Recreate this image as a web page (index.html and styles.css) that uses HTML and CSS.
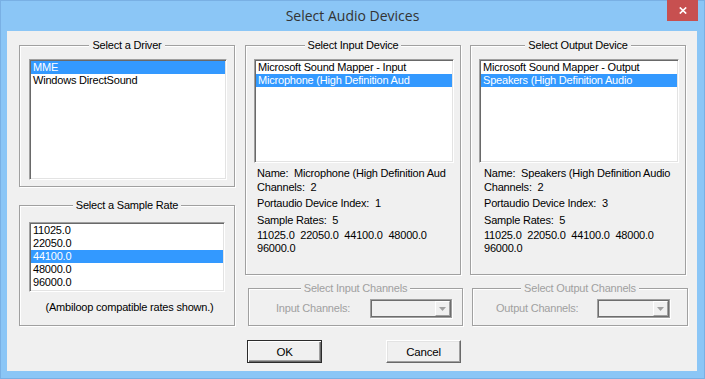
FILE: index.html
```html
<!DOCTYPE html>
<html>
<head>
<meta charset="utf-8">
<title>Select Audio Devices</title>
<link rel="stylesheet" href="styles.css">
</head>
<body>
<div class="window">
  <div class="titlebar">
    <div class="title">Select Audio Devices</div>
    <div class="close">
      <svg width="8" height="7" viewBox="0 0 8 7"><path d="M0.8 0.5 L7.2 6.5 M7.2 0.5 L0.8 6.5" stroke="#fff" stroke-width="1.7"/></svg>
    </div>
  </div>
  <div class="client">
    <div class="columns">
      <div class="col">
        <div class="group g-driver">
          <div class="gtitle">Select a Driver</div>
          <div class="listbox lb-driver">
            <div class="item sel">MME</div>
            <div class="item">Windows DirectSound</div>
          </div>
        </div>
        <div class="group g-rate">
          <div class="gtitle">Select a Sample Rate</div>
          <div class="listbox lb-rate">
            <div class="item">11025.0</div>
            <div class="item">22050.0</div>
            <div class="item sel">44100.0</div>
            <div class="item">48000.0</div>
            <div class="item">96000.0</div>
          </div>
          <div class="note">(Ambiloop compatible rates shown.)</div>
        </div>
      </div>
      <div class="col col-mid">
        <div class="group g-device">
          <div class="gtitle">Select Input Device</div>
          <div class="listbox lb-device">
            <div class="item">Microsoft Sound Mapper - Input</div>
            <div class="item sel">Microphone (High Definition Aud</div>
          </div>
          <div class="info info-in">
            <div class="i-name">Name:  Microphone (High Definition Aud</div>
            <div class="i-ch">Channels:  2</div>
            <div class="i-pa">Portaudio Device Index:  1</div>
            <div class="i-sr">Sample Rates:  5</div>
            <div class="i-rates">11025.0  22050.0  44100.0  48000.0<br>96000.0</div>
          </div>
        </div>
        <div class="group g-chan g-chan-in">
          <div class="gtitle disabled">Select Input Channels</div>
          <div class="chanrow">
            <span class="chanlabel chanlabel-in">Input Channels:</span>
            <div class="combo combo-in">
              <div class="dd"><svg width="7" height="4" viewBox="0 0 7 4"><path d="M0 0 H7 L3.5 4 Z" fill="#a0a0a0"/></svg></div>
            </div>
          </div>
        </div>
      </div>
      <div class="col col-right">
        <div class="group g-device">
          <div class="gtitle">Select Output Device</div>
          <div class="listbox lb-device">
            <div class="item">Microsoft Sound Mapper - Output</div>
            <div class="item sel">Speakers (High Definition Audio</div>
          </div>
          <div class="info info-out">
            <div class="i-name">Name:  Speakers (High Definition Audio</div>
            <div class="i-ch">Channels:  2</div>
            <div class="i-pa">Portaudio Device Index:  3</div>
            <div class="i-sr">Sample Rates:  5</div>
            <div class="i-rates">11025.0  22050.0  44100.0  48000.0<br>96000.0</div>
          </div>
        </div>
        <div class="group g-chan g-chan-out">
          <div class="gtitle disabled">Select Output Channels</div>
          <div class="chanrow">
            <span class="chanlabel chanlabel-out">Output Channels:</span>
            <div class="combo combo-out">
              <div class="dd"><svg width="7" height="4" viewBox="0 0 7 4"><path d="M0 0 H7 L3.5 4 Z" fill="#a0a0a0"/></svg></div>
            </div>
          </div>
        </div>
      </div>
    </div>
    <div class="buttons">
      <div class="btn btn-default">OK</div>
      <div class="btn btn-cancel">Cancel</div>
    </div>
  </div>
</div>
</body>
</html>
```
FILE: styles.css
```css
* { box-sizing: border-box; }
html, body { margin: 0; padding: 0; }
body {
  width: 705px;
  height: 379px;
  overflow: hidden;
  background: #8bc6f6;
  font-family: "Liberation Sans", Arial, sans-serif;
  font-size: 11px;
  letter-spacing: -0.2px;
  color: #000;
}
.window {
  position: relative;
  width: 705px;
  height: 379px;
  background: #8bc6f6;
  border: 1px solid #79b0e4;
}
.titlebar {
  display: grid;
  grid-template-columns: 1fr auto 1fr;
  height: 30px;
}
.title {
  grid-column: 2;
  font-family: "Open Sans", "Noto Sans", sans-serif;
  font-size: 14px;
  letter-spacing: 0;
  line-height: 30px;
  color: #333;
}
.close {
  grid-column: 3;
  justify-self: end;
  align-self: start;
  width: 31px;
  height: 21px;
  margin-top: -1px;
  margin-right: 6px;
  background: #c75050;
  display: flex;
  align-items: center;
  justify-content: center;
}
.close svg { display: block; }
.client {
  margin-left: 6px;
  width: 690px;
  height: 340px;
  background: #f0f0f0;
  padding: 14px 0 0 12px;
}
.columns {
  display: flex;
  align-items: flex-start;
}
.col {
  flex: none;
  width: 217px;
  display: flex;
  flex-direction: column;
}
.col-mid { margin-left: 9px; }
.col-right { margin-left: 8px; }

.group {
  width: 216px;
  border: 1px solid #a0a0a0;
  box-shadow: inset 1px 1px 0 #fff, 1px 1px 0 #fff;
}
.gtitle {
  margin: -7px auto 0;
  width: max-content;
  padding: 0 3px;
  height: 13px;
  line-height: 13px;
  background: #f0f0f0;
}
.gtitle.disabled { color: #a0a0a0; }
.g-driver { height: 142px; }
.g-rate { margin-top: 18px; height: 121px; }
.g-device { height: 230px; }
.g-chan { margin-top: 13px; height: 38px; }
.g-chan-in { margin-left: 3px; width: 215px; }
.g-chan-out { margin-left: 2px; width: 216px; }

.listbox {
  background: #fff;
  border: 1px solid;
  border-color: #a0a0a0 #fff #fff #a0a0a0;
  box-shadow: inset 1px 1px 0 #696969, inset -1px -1px 0 #e3e3e3;
  padding: 1px;
  overflow: hidden;
}
.lb-driver { margin: 7px 0 0 9px; width: 198px; height: 121px; }
.lb-rate { margin: 10px 0 0 9px; width: 196px; height: 70px; }
.lb-device { margin: 7px 0 0 8px; width: 200px; height: 104px; }
.item {
  height: 13px;
  line-height: 13px;
  padding-left: 2px;
  white-space: nowrap;
  overflow: hidden;
}
.item.sel { background: #3399ff; color: #fff; }
.note {
  margin-top: 9px;
  padding-left: 5px;
  line-height: 13px;
  text-align: center;
}

.info { line-height: 13px; }
.info div { white-space: pre; }
.info-in { margin-left: 11px; }
.info-out { margin-left: 13px; }
.i-name { margin-top: 4px; }
.i-ch { margin-top: 1px; }
.i-pa { margin-top: 3px; }
.i-sr { margin-top: 4px; }
.i-rates { margin-top: 2px; }

.chanrow {
  display: flex;
  align-items: center;
  margin-top: 4px;
}
.chanlabel { color: #a0a0a0; line-height: 13px; flex: none; }
.chanlabel-in { margin-left: 27px; width: 94px; }
.chanlabel-out { margin-left: 23px; width: 101px; }
.combo {
  flex: none;
  height: 19px;
  border: 1px solid #a0a0a0;
  box-shadow: inset 1px 1px 0 #6d6d6d, inset -1px -1px 0 #6d6d6d, 1px 1px 0 #fff;
  padding: 1px;
  display: flex;
  justify-content: flex-end;
  background: #f0f0f0;
}
.combo-in { width: 82px; }
.combo-out { width: 73px; }
.dd {
  width: 15px;
  height: 15px;
  border: 1px solid;
  border-color: #fff #a0a0a0 #a0a0a0 #fff;
  background: #f0f0f0;
  display: flex;
  align-items: center;
  justify-content: center;
}
.dd svg { display: block; }

.buttons {
  display: flex;
  margin-top: 14px;
  padding-left: 228px;
}
.btn {
  width: 75px;
  height: 23px;
  display: flex;
  align-items: center;
  justify-content: center;
  background: #f0f0f0;
  font-size: 11.5px;
}
.btn-cancel {
  margin-left: 64px;
  border: 1px solid;
  border-color: #fff #696969 #696969 #fff;
  box-shadow: inset -1px -1px 0 #a0a0a0, inset 1px 1px 0 #e3e3e3;
}
.btn-default {
  border: 1px solid #2b2b2b;
  box-shadow: inset 1px 1px 0 #fff, inset -1px -1px 0 #696969, inset -2px -2px 0 #a0a0a0;
}
```
